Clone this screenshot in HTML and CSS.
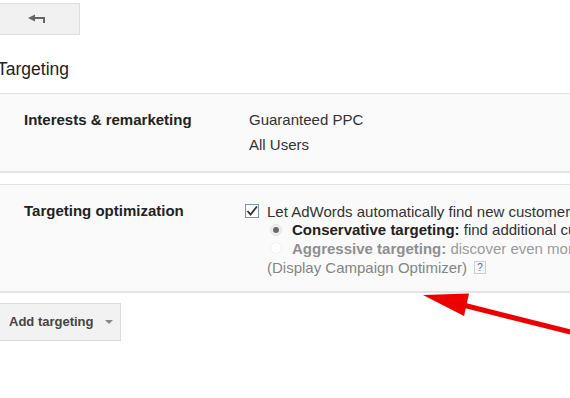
FILE: index.html
```html
<!DOCTYPE html>
<html>
<head>
<meta charset="utf-8">
<link rel="stylesheet" href="styles.css">
</head>
<body>
<div class="page">
  <div class="topbar">
    <div class="back-btn">
      <svg class="back-icon" width="18" height="10" viewBox="0 0 18 10">
        <polygon points="0,4 7,0.5 7,7.5" fill="#666"/>
        <rect x="6" y="3" width="11" height="2" fill="#666"/>
        <rect x="15" y="3" width="2" height="6" fill="#666"/>
      </svg>
    </div>
  </div>
  <h1 class="title">Targeting</h1>

  <div class="section section-first">
    <div class="row">
      <div class="label">Interests &amp; remarketing</div>
      <div class="value">
        <div class="line">Guaranteed PPC</div>
        <div class="line">All Users</div>
      </div>
    </div>
  </div>

  <div class="section section-second">
    <div class="row row-opt">
      <div class="label">Targeting optimization</div>
      <div class="value">
        <div class="opt-line check-line">
          <svg class="checkbox" width="14" height="14" viewBox="0 0 14 14">
            <rect x="0.5" y="0.5" width="13" height="13" fill="#fff" stroke="#7f93b8"/>
            <path d="M2.5 7 L5.5 10.5 L12 2.5" fill="none" stroke="#333" stroke-width="1.8"/>
          </svg>
          <span>Let AdWords automatically find new customers</span>
        </div>
        <div class="opt-line radio-line">
          <span class="radio radio-on"></span>
          <span><b class="strong">Conservative targeting:</b> find additional customers</span>
        </div>
        <div class="opt-line radio-line muted">
          <span class="radio radio-off"></span>
          <span><b>Aggressive targeting:</b> discover even more customers</span>
        </div>
        <div class="opt-line dco">
          <span>(Display Campaign Optimizer)</span>
          <span class="help">?</span>
        </div>
      </div>
    </div>
  </div>

  <div class="actions">
    <div class="add-btn">
      <span>Add targeting</span>
      <span class="caret"></span>
    </div>
  </div>
</div>

<svg class="annotation" width="570" height="398" viewBox="0 0 570 398">
  <line x1="465" y1="305.5" x2="600" y2="339.5" stroke="#ee0000" stroke-width="5"/>
  <polygon points="423,295 469,293.5 464,316" fill="#ee0000"/>
</svg>
</body>
</html>
```

FILE: styles.css
```css
html, body {
  margin: 0;
  padding: 0;
  background: #fff;
}

body {
  width: 570px;
  height: 398px;
  overflow: hidden;
  position: relative;
  font-family: "Liberation Sans", Arial, sans-serif;
  color: #333;
}

.topbar {
  padding-top: 3px;
}

.back-btn {
  box-sizing: border-box;
  width: 81px;
  height: 32px;
  margin-left: -1px;
  background: #f1f1f1;
  border: 1px solid #dedede;
  display: flex;
  align-items: flex-start;
  padding: 10px 0 0 28px;
}

.back-icon {
  display: block;
}

.title {
  margin: 24px 0 0 -3px;
  font-size: 17.5px;
  line-height: 21px;
  font-weight: normal;
  color: #222;
  height: 34px;
}

.section {
  background: #fafafa;
  border-top: 1px solid #e2e2e2;
  border-bottom: 2px solid #e4e4e4;
  margin-left: -2px;
}

.section-first {
  padding: 13px 0 14px 0;
}

.section-second {
  margin-top: 11px;
  padding: 17px 0 14px 0;
}

.row {
  display: grid;
  grid-template-columns: 251px 1fr;
  font-size: 15px;
}

.label {
  padding-left: 26px;
  font-weight: bold;
  color: #222;
  line-height: 25px;
}

.row-opt .label {
  line-height: 18.5px;
}

.value .line {
  line-height: 25px;
  white-space: nowrap;
  color: #333;
}

.opt-line {
  display: flex;
  align-items: center;
  height: 18.5px;
  white-space: nowrap;
  color: #333;
}

.check-line {
  margin-left: -4px;
}

.checkbox {
  flex: none;
  margin-right: 8px;
}

.radio-line {
  padding-left: 21px;
}

.radio {
  flex: none;
  box-sizing: border-box;
  width: 12px;
  height: 12px;
  border-radius: 50%;
  margin-right: 10px;
  display: flex;
  align-items: center;
  justify-content: center;
}

.radio-on {
  background: #efefef;
  border: 1px solid #e2e2e2;
}

.radio-on::after {
  content: "";
  width: 6px;
  height: 6px;
  border-radius: 50%;
  background: #6a6a6a;
}

.radio-off {
  background: #fff;
  border: 1px solid #f0f0f0;
}

.strong {
  color: #222;
}

.muted {
  color: #9a9a9a;
}

.muted b {
  color: #8f8f8f;
}

.dco {
  color: #858585;
  padding-left: 18px;
  margin-top: 0.5px;
}

.help {
  box-sizing: border-box;
  display: inline-flex;
  align-items: center;
  justify-content: center;
  width: 12px;
  height: 13px;
  margin-left: 7px;
  border: 1px solid #cfcfcf;
  background: #f6f6f6;
  font-size: 10px;
  color: #666;
}

.actions {
  padding-top: 10px;
}

.add-btn {
  box-sizing: border-box;
  width: 122px;
  height: 38px;
  margin-left: -1px;
  background: #f2f2f2;
  border: 1px solid #dcdcdc;
  display: flex;
  align-items: center;
  padding-left: 9px;
  font-size: 13px;
  font-weight: bold;
  color: #444;
}

.caret {
  width: 0;
  height: 0;
  border-left: 4px solid transparent;
  border-right: 4px solid transparent;
  border-top: 4px solid #888;
  margin-left: 11px;
}

.annotation {
  position: absolute;
  left: 0;
  top: 0;
  pointer-events: none;
}
```
